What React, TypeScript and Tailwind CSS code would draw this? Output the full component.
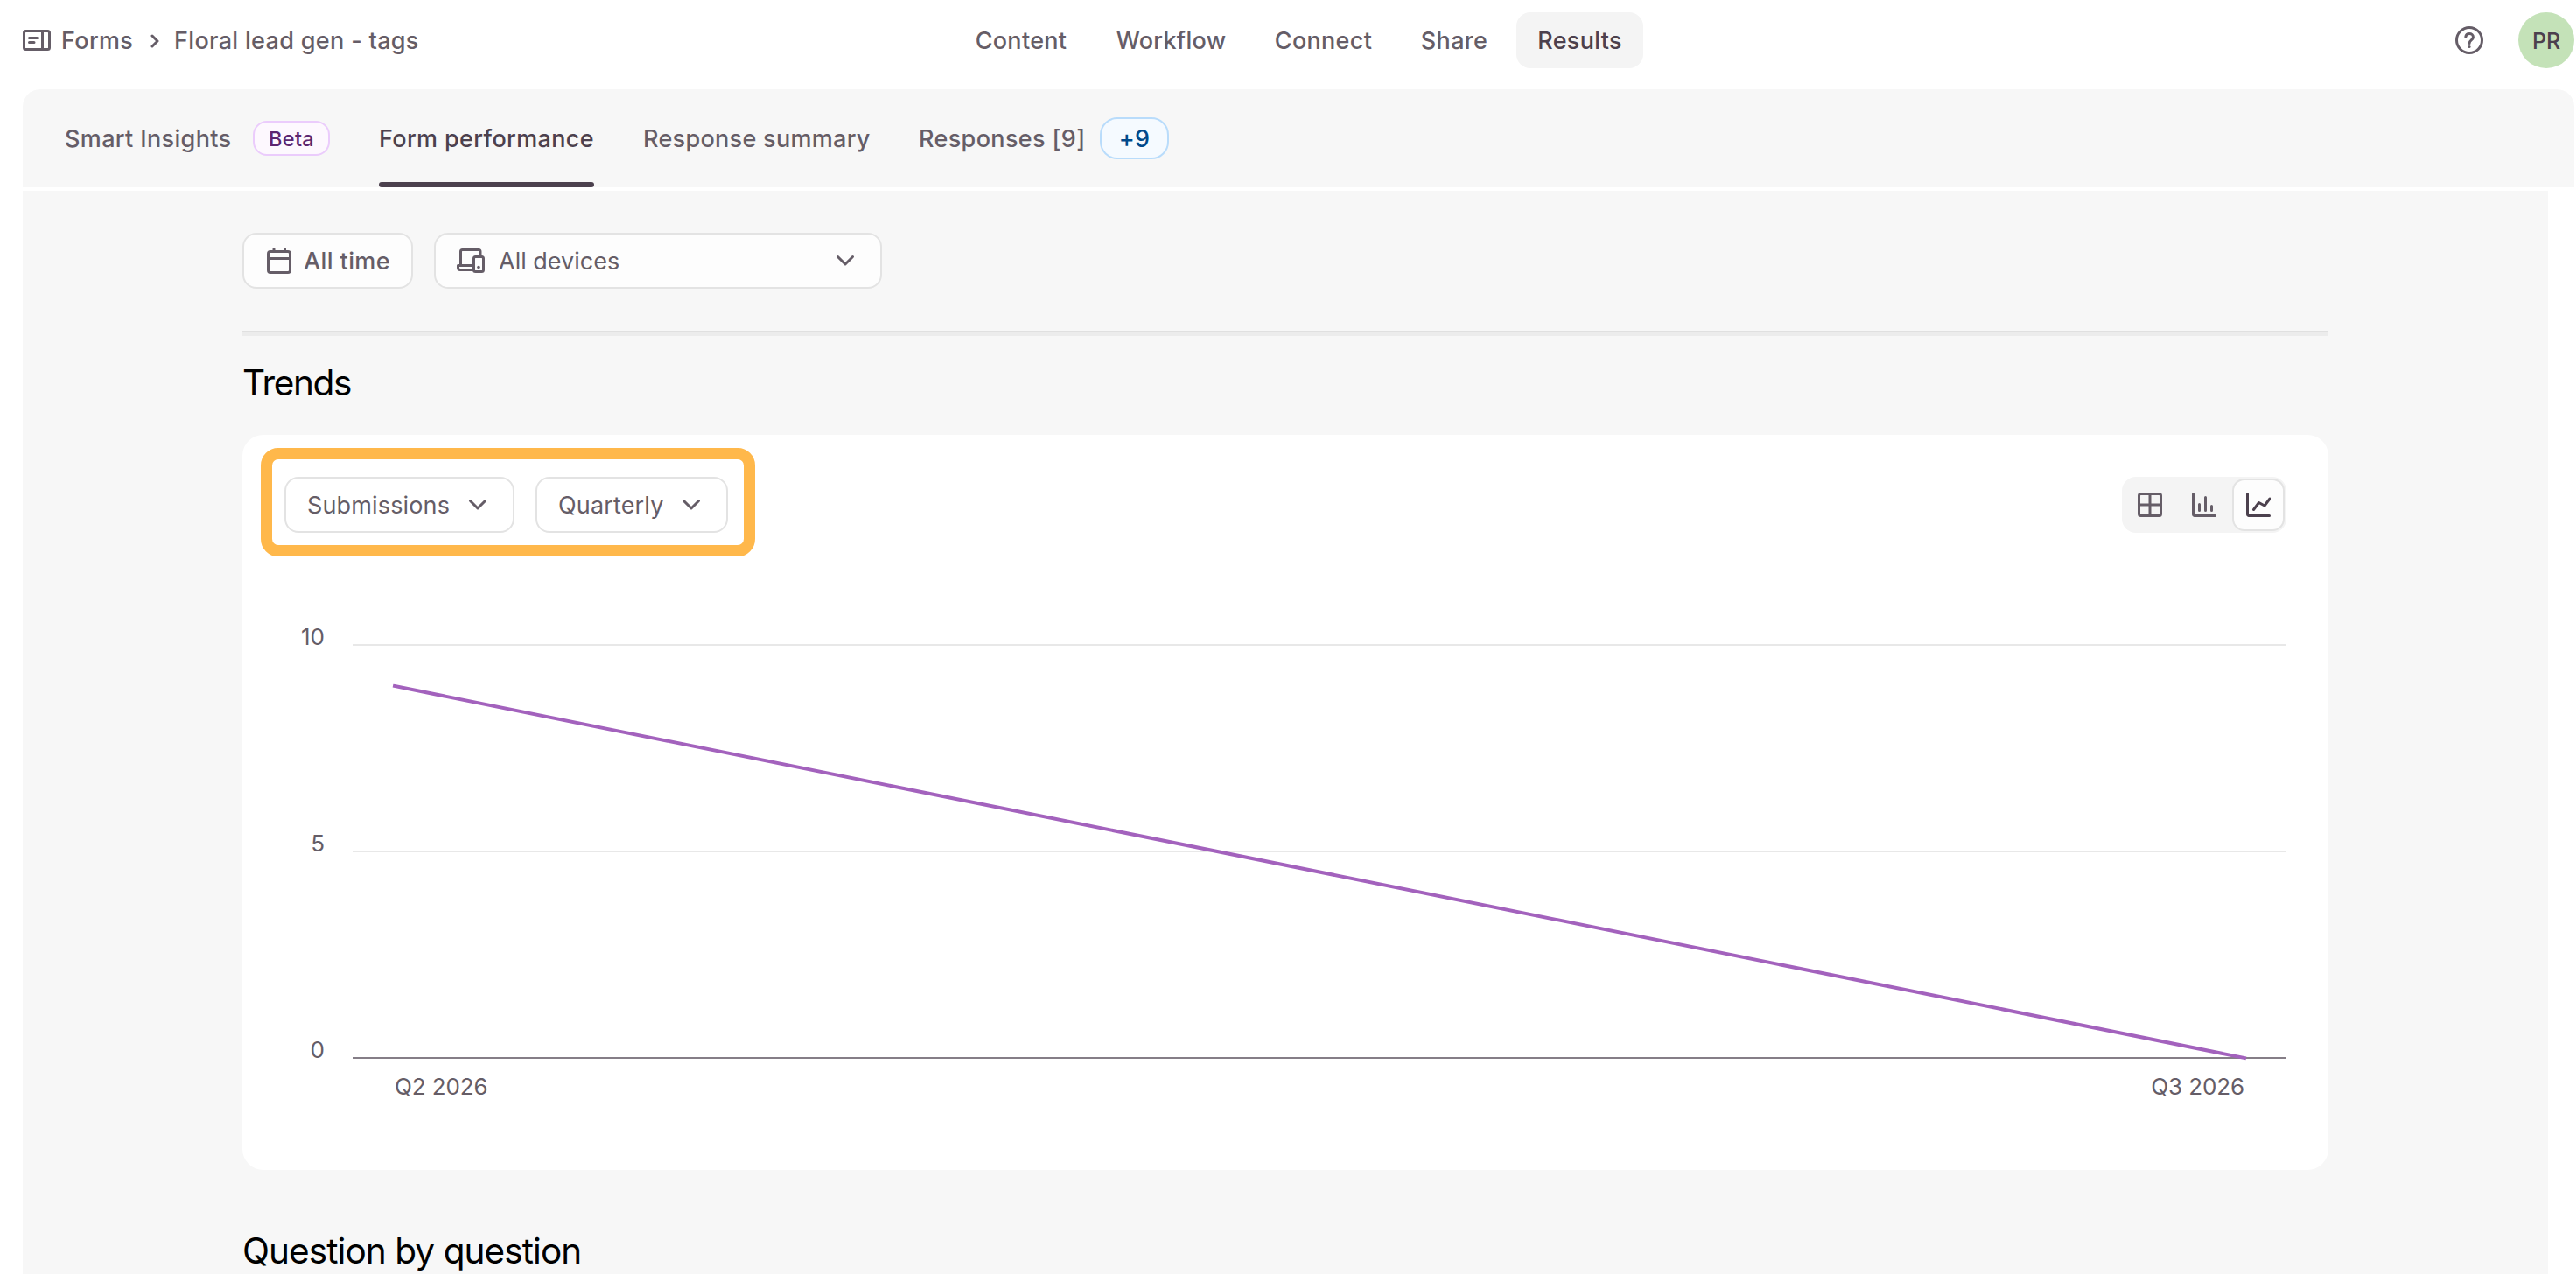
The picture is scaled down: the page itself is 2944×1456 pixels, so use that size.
import { useState } from "react";
import clsx from "clsx";

const navItems = [
    { label: "Content", className: "w-[162px]" },
    { label: "Workflow", className: "w-[181px]" },
    { label: "Connect", className: "w-[167px]" },
    { label: "Share", className: "w-[132px]" },
    { label: "Results", className: "w-[145px]" },
];

const ticks = [
    { label: "10", className: "h-[236px]" },
    { label: "5", className: "h-[236px]" },
    { label: "0", className: "h-[42px]" },
];

/* Icons */
function FormIcon() {
    return (
        <svg width="32" height="24" viewBox="0 0 32 24" fill="none" stroke="currentColor" strokeWidth="3">
            <rect x="1.5" y="1.5" width="29" height="21" rx="2" />
            <path d="M22.5 2v20" />
            <path d="M7.5 9.5h9M7.5 14.5h5.5" strokeLinecap="round" />
        </svg>
    );
}

function ChevronDown() {
    return (
        <svg width="22" height="14" viewBox="0 0 22 14" fill="none" stroke="currentColor" strokeWidth="3" strokeLinecap="round" strokeLinejoin="round">
            <path d="M2.5 2.5 11 11l8.5-8.5" />
        </svg>
    );
}

function HelpIcon() {
    return (
        <svg width="32" height="32" viewBox="0 0 32 32" fill="none" stroke="currentColor" strokeWidth="3" strokeLinecap="round">
            <circle cx="16" cy="16" r="14.5" />
            <path d="M11.8 12.3c.3-2.2 2-3.7 4.3-3.7 2.4 0 4.3 1.6 4.3 3.8 0 3.4-4.3 3.5-4.3 7" />
            <circle cx="16" cy="23.5" r="1.6" fill="currentColor" stroke="none" />
        </svg>
    );
}

function CalendarIcon() {
    return (
        <svg width="28" height="30" viewBox="0 0 28 30" fill="none" stroke="currentColor" strokeWidth="3">
            <rect x="1.5" y="4.5" width="25" height="24" rx="2.5" />
            <path d="M2 12.5h24" />
            <path d="M8 1.5v3M20.5 1.5v3" strokeLinecap="round" />
        </svg>
    );
}

function DevicesIcon() {
    return (
        <svg width="32" height="28" viewBox="0 0 32 28" fill="none" stroke="currentColor" strokeWidth="3" strokeLinejoin="round">
            <path d="M4.5 19V3.5a2 2 0 0 1 2-2H25a2 2 0 0 1 2 2V9" />
            <path d="M19 19.5H1.5V22A2.5 2.5 0 0 0 4 24.5h15" />
            <rect x="19.5" y="9.5" width="11" height="17" rx="2" />
            <circle cx="25" cy="21.5" r="1.8" fill="currentColor" stroke="none" />
        </svg>
    );
}

function TableIcon() {
    return (
        <svg width="28" height="28" viewBox="0 0 28 28" fill="none" stroke="currentColor" strokeWidth="3">
            <rect x="1.5" y="1.5" width="25" height="25" rx="2" />
            <path d="M14 2v24M2 14h24" />
        </svg>
    );
}

function BarIcon() {
    return (
        <svg width="28" height="28" viewBox="0 0 28 28" fill="none" stroke="currentColor" strokeWidth="3" strokeLinecap="round" strokeLinejoin="round">
            <path d="M1.5 1.5V25A1.5 1.5 0 0 0 3 26.5h23.5" />
            <path d="M8.5 13.5v7M15.5 5.5v15M22.5 15.5v5" />
        </svg>
    );
}

function LineIcon() {
    return (
        <svg width="28" height="28" viewBox="0 0 28 28" fill="none" stroke="currentColor" strokeWidth="3" strokeLinecap="round" strokeLinejoin="round">
            <path d="M1.5 1.5V25A1.5 1.5 0 0 0 3 26.5h23.5" />
            <path d="m8.500 19.500 6-8 6.500 3.500 6-8" />
        </svg>
    );
}

const views = [
    { id: "table", icon: <TableIcon /> },
    { id: "bar", icon: <BarIcon /> },
    { id: "line", icon: <LineIcon /> },
];

function Header() {
    return (
        <header className="flex h-[102px] items-start pl-[26px] pr-[2px] pt-[14px]">
            {/* Breadcrumb */}
            <div className="flex h-16 w-[1060px] items-center font-medium tracking-[0.33px]">
                <FormIcon />
                <span className="ml-[12px] w-[84px] pt-[2px]">Forms</span>
                <svg className="ml-[18px] mt-[2px]" width="10" height="16" viewBox="0 0 10 16" fill="none" stroke="currentColor" strokeWidth="3" strokeLinecap="round" strokeLinejoin="round">
                    <path d="m2 2 6 6-6 6" />
                </svg>
                <span className="ml-[17px] pt-[2px]">Floral lead gen - tags</span>
            </div>

            {/* Navigation */}
            <nav className="flex h-16 font-medium tracking-[0.3px]">
                {navItems.map((item) => (
                    <button
                        key={item.label}
                        className={clsx(
                            item.className,
                            "rounded-2xl pt-[2px]",
                            item.label === "Results" && "ml-[5px] bg-[#f4f4f4] text-[#4c414e]"
                        )}
                    >
                        {item.label}
                    </button>
                ))}
            </nav>

            <div className="ml-auto flex h-16 items-center gap-10">
                <HelpIcon />
                <div className="flex h-16 w-16 items-center justify-center rounded-full bg-[#c4e2b8] pt-[2px] text-[25px] font-medium text-[#4c414e]">
                    PR
                </div>
            </div>
        </header>
    );
}

function ResultTabs() {
    return (
        <div className="ml-[26px] mr-[2px] flex h-[112px] rounded-t-[20px] bg-[#f7f7f7] pl-12 font-medium tracking-[0.36px]">
            <div className="flex w-[359px] items-center">
                <span className="w-[215px] pt-[2px]">Smart Insights</span>
                <span className="flex h-10 w-[88px] items-center justify-center rounded-2xl border-2 border-[#ebccfc] bg-[#fdf8fe] pt-px text-[23.5px] font-[450] text-[#5c2670]">
                    Beta
                </span>
            </div>
            <div className="relative flex w-[246px] items-center pt-[2px] text-[#4c414e]">
                Form performance
                <div className="absolute bottom-0 left-0 h-1.5 w-full rounded-[3px] bg-[#4c414e]" />
            </div>
            <div className="ml-[56px] flex w-[258px] items-center pt-[2px] tracking-[0.3px]">Response summary</div>
            <div className="ml-[57px] flex items-center">
                <span className="w-[207px] pt-[2px]">Responses [9]</span>
                <span className="flex h-12 w-[79px] items-center justify-center rounded-[20px] border-2 border-[#b9dcfb] bg-[#f5faff] pt-px font-[450] text-[#00498a]">
                    +9
                </span>
            </div>
        </div>
    );
}

function Filters() {
    return (
        <div className="flex h-16 gap-6">
            <button className="flex w-[195px] items-center rounded-2xl border-2 border-[#e3e3e3] bg-[#fdfdfd] pl-[26px] font-medium tracking-[0.4px]">
                <CalendarIcon />
                <span className="ml-[14px] pt-[2px]">All time</span>
            </button>
            <button className="flex w-[512px] items-center rounded-2xl border-2 border-[#e3e3e3] bg-[#fdfdfd] pl-[24px] pr-[29px]">
                <DevicesIcon />
                <span className="ml-[16px] pt-[2px]">All devices</span>
                <span className="ml-auto">
                    <ChevronDown />
                </span>
            </button>
        </div>
    );
}

function TrendChart() {
    return (
        <div className="flex">
            <div className="-mt-[6px] w-[94px] text-right text-[26px] leading-8">
                {ticks.map((tick) => (
                    <div key={tick.label} className={tick.className}>
                        {tick.label}
                    </div>
                ))}
            </div>
            <div className="ml-[32px] mt-[18px] w-[2210px]">
                <svg className="block" width="2210" height="476" viewBox="0 0 2210 476" fill="none">
                    <path d="M0 1h2210M0 237h2210" stroke="#e8e8e8" strokeWidth="2" />
                    <path d="M0 473h2210" stroke="#857e87" strokeWidth="2" />
                    <path d="M48 48 2162 473" stroke="#a362bd" strokeWidth="4" strokeLinecap="square" />
                </svg>
                <div className="flex justify-between pl-[48px] pr-[48px] pt-[14px] text-[26px] leading-8 tracking-[-0.1px]">
                    <span>Q2 2026</span>
                    <span>Q3 2026</span>
                </div>
            </div>
        </div>
    );
}

function TrendsCard() {
    const [view, setView] = useState("line");

    return (
        <div className="h-[840px] rounded-[24px] bg-white pt-[15px]">
            <div className="flex items-start justify-between pl-[21px] pr-[48px]">
                {/* Highlighted selectors */}
                <div className="flex h-[124px] w-[565px] gap-6 rounded-[20px] border-[13px] border-[#ffb84b] pl-[14px] pt-[20px] tracking-[0.15px]">
                    <button className="flex h-16 w-[263px] items-center justify-between rounded-2xl border-2 border-[#e3e3e3] pl-[24px] pr-[29px]">
                        <span className="pt-[2px]">Submissions</span>
                        <ChevronDown />
                    </button>
                    <button className="flex h-16 w-[220px] items-center justify-between rounded-2xl border-2 border-[#e3e3e3] pl-[24px] pr-[29px]">
                        <span className="pt-[2px]">Quarterly</span>
                        <ChevronDown />
                    </button>
                </div>
                <div className="mt-[33px] flex h-16 w-[188px] items-center gap-[2px] rounded-2xl bg-[#f4f4f4] pl-[2px]">
                    {views.map((v) => (
                        <button
                            key={v.id}
                            onClick={() => setView(v.id)}
                            className={clsx(
                                "flex h-[60px] w-[60px] items-center justify-center rounded-[14px] border-2",
                                view === v.id ? "border-[#e3e3e3] bg-[#fdfdfd] text-[#4c414e]" : "border-transparent"
                            )}
                        >
                            {v.icon}
                        </button>
                    ))}
                </div>
            </div>
            <div className="mt-[82px]">
                <TrendChart />
            </div>
        </div>
    );
}

export default function App() {
    return (
        <div className="h-[1456px] overflow-hidden bg-white font-['Inter','Liberation_Sans',sans-serif] text-[27px] leading-8 whitespace-nowrap text-[#655d67]">
            <Header />
            <ResultTabs />
            <main className="ml-[26px] mt-1 h-[1238px] w-[2886px] bg-[#f7f7f7] pl-[251px] pt-12">
                <div className="w-[2384px]">
                    <Filters />
                    <div className="mt-12 h-1.5 border-t-2 border-[#e0e0e0] bg-[#ececec]" />
                    <h2 className="mt-[30px] text-[40.5px] leading-[48px] tracking-[-1.35px] text-black">Trends</h2>
                    <div className="mt-[35px]">
                        <TrendsCard />
                    </div>
                    <h2 className="mt-[69px] text-[40.5px] leading-[48px] tracking-[-0.92px] text-black">Question by question</h2>
                </div>
            </main>
        </div>
    );
}
